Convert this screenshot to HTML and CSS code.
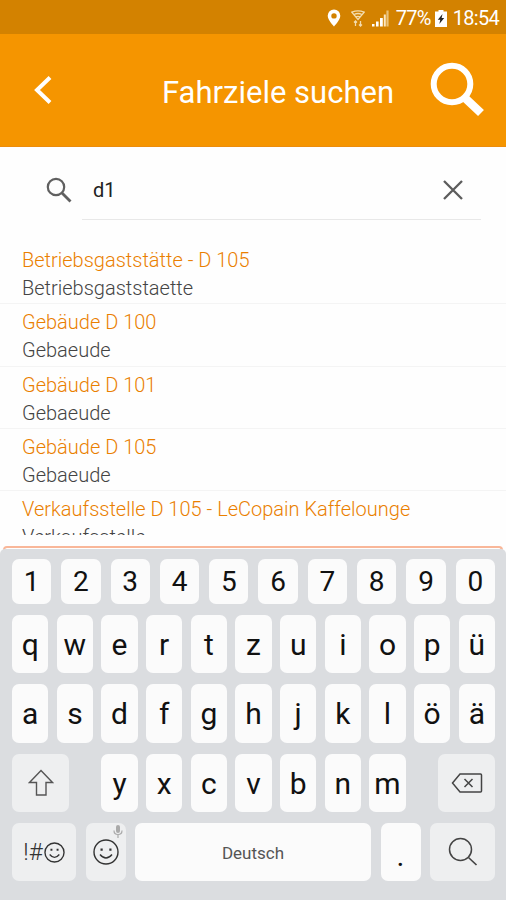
FILE: index.html
```html
<!DOCTYPE html>
<html lang="de">
<head>
    <meta charset="UTF-8">
    <meta name="viewport" content="width=device-width, initial-scale=1.0">
    <title>Fahrziele suchen</title>
    <link rel="stylesheet" href="styles.css">
</head>
<body>
    <div class="status-bar">
        <svg class="status-pin" width="14" height="18" viewBox="0 0 14 18"><path fill="#fff" fill-rule="evenodd" d="M7 .5a6.3 6.3 0 0 0-6.3 6.3C.7 11 7 17.500 7 17.500S13.300 11 13.300 6.800A6.300 6.300 0 0 0 7 .5zm0 3.700a2.700 2.700 0 1 1 0 5.400 2.700 2.700 0 0 1 0-5.400z"/></svg>
        <svg class="status-wifi" width="14" height="17" viewBox="0 0 14 17" fill="none" stroke="#f3dcae" stroke-width="1.300"><path d="M.8 2.200Q7-.6 13.200 2.200L7 9.500z"/><path d="M3 4.500Q7 2.500 11 4.500M4.800 6.800Q7 5.800 9.200 6.800"/><path d="M4.500 16v-5M3 12.500L4.500 11 6 12.500M9.500 11v5M8 14.500l1.500 1.500 1.500-1.500"/></svg>
        <svg class="status-signal" width="17" height="17" viewBox="0 0 17 17"><path fill="#fff" d="M0 14h2.500v2.500H0zM4 11.500h2.600v5H4zM8 8h2.800v8.500H8z"/><path fill="#fbe6c0" d="M11.800 4.500h2v12h-2z"/><path fill="#eac27a" d="M14.400.5h2.200v16h-2.200z"/></svg>
        <span class="status-percent">77%</span>
        <svg class="status-battery" width="12" height="17" viewBox="0 0 12 17"><path fill="#fff" d="M3.500 0h5v1.600H12V17H0V1.600h3.500z"/><path fill="#222" d="M7.500 4L2.800 9.800h2.500L4.300 14 9.200 8H6.600z"/></svg>
        <span class="status-time">18:54</span>
    </div>

    <div class="header">
        <svg class="header-back" width="20" height="32" viewBox="0 0 20 32"><path d="M17 3.500L4 16l13 12.500" fill="none" stroke="#fff" stroke-width="4"/></svg>
        <h1>Fahrziele suchen</h1>
        <svg class="header-search" width="56" height="56" viewBox="0 0 56 56" fill="none" stroke="#fff"><circle cx="22" cy="22" r="18.300" stroke-width="6"/><path d="M34.500 35.500L51 51" stroke-width="8.500"/></svg>
    </div>

    <div class="search">
        <svg class="search-icon" width="26" height="26" viewBox="0 0 26 26" fill="none" stroke="#606060"><circle cx="10" cy="10" r="8.200" stroke-width="2.200"/><path d="M16 16l8.500 8.500" stroke-width="2.800"/></svg>
        <div class="search-field">
            <span>d1</span>
            <svg width="20" height="20" viewBox="0 0 20 20"><path d="M1 1l18 18M19 1L1 19" fill="none" stroke="#5c5c5c" stroke-width="2.300"/></svg>
        </div>
    </div>

    <div class="results">
        <div class="result">
            <div class="result-title">Betriebsgaststätte - D 105</div>
            <div class="result-type">Betriebsgaststaette</div>
        </div>
        <div class="result">
            <div class="result-title">Gebäude D 100</div>
            <div class="result-type">Gebaeude</div>
        </div>
        <div class="result">
            <div class="result-title">Gebäude D 101</div>
            <div class="result-type">Gebaeude</div>
        </div>
        <div class="result">
            <div class="result-title">Gebäude D 105</div>
            <div class="result-type">Gebaeude</div>
        </div>
        <div class="result">
            <div class="result-title">Verkaufsstelle D 105 - LeCopain Kaffelounge</div>
            <div class="result-type">Verkaufsstelle</div>
        </div>
    </div>
    <div class="panel-edge"></div>

    <div class="keyboard">
        <div class="row numbers">
            <div class="key">1</div>
            <div class="key">2</div>
            <div class="key">3</div>
            <div class="key">4</div>
            <div class="key">5</div>
            <div class="key">6</div>
            <div class="key">7</div>
            <div class="key">8</div>
            <div class="key">9</div>
            <div class="key">0</div>
        </div>
        <div class="row">
            <div class="key">q</div>
            <div class="key">w</div>
            <div class="key">e</div>
            <div class="key">r</div>
            <div class="key">t</div>
            <div class="key">z</div>
            <div class="key">u</div>
            <div class="key">i</div>
            <div class="key">o</div>
            <div class="key">p</div>
            <div class="key">ü</div>
        </div>
        <div class="row">
            <div class="key">a</div>
            <div class="key">s</div>
            <div class="key">d</div>
            <div class="key">f</div>
            <div class="key">g</div>
            <div class="key">h</div>
            <div class="key">j</div>
            <div class="key">k</div>
            <div class="key">l</div>
            <div class="key">ö</div>
            <div class="key">ä</div>
        </div>
        <div class="row shift-row">
            <div class="key special">
                <svg width="26" height="28" viewBox="0 0 26 28"><path d="M13 1.500L24.500 13.500H18V26H8.500V13.500H1.500z" fill="none" stroke="#555" stroke-width="1.400"/></svg>
            </div>
            <div class="letters">
                <div class="key">y</div>
                <div class="key">x</div>
                <div class="key">c</div>
                <div class="key">v</div>
                <div class="key">b</div>
                <div class="key">n</div>
                <div class="key">m</div>
            </div>
            <div class="key special">
                <svg width="32" height="22" viewBox="0 0 32 22" fill="none" stroke="#444" stroke-width="1.500"><path d="M9 2H29.500Q30.500 2 30.500 3V19Q30.500 20 29.500 20H9L1.500 11z"/><path d="M13.500 7l8 8M21.500 7l-8 8"/></svg>
            </div>
        </div>
        <div class="row bottom-row">
            <div class="key special symbols">
                <span>!#</span>
                <svg width="21" height="21" viewBox="0 0 26 26" fill="none" stroke="#333" stroke-width="1.700"><circle cx="13" cy="13" r="11.800"/><path d="M7 15.500Q13 22.500 19 15.500"/><path fill="#333" stroke="none" d="M8 8.500h2.400v2.400H8zM15.600 8.500H18v2.400h-2.400z"/></svg>
            </div>
            <div class="key special">
                <svg width="26" height="26" viewBox="0 0 26 26" fill="none" stroke="#333" stroke-width="1.400"><circle cx="13" cy="13" r="12"/><path d="M7 15.500Q13 22.500 19 15.500"/><path fill="#333" stroke="none" d="M7.500 9.500h2.200v2.200H7.500zM16.300 9.500h2.200v2.200h-2.200z"/></svg>
                <svg class="mic" width="10" height="13" viewBox="0 0 10 13"><rect x="3" y="0" width="4" height="8" rx="2" fill="#aaa"/><path d="M1 5.500Q1 9.500 5 9.500T9 5.500M5 9.500V13" fill="none" stroke="#aaa" stroke-width="1.200"/></svg>
            </div>
            <div class="key space">Deutsch</div>
            <div class="key dot">.</div>
            <div class="key special">
                <svg width="30" height="30" viewBox="0 0 30 30" fill="none" stroke="#444"><circle cx="12.500" cy="12.500" r="11" stroke-width="1.500"/><path d="M20.500 20.500l8 7.500" stroke-width="1.700"/></svg>
            </div>
        </div>
    </div>
</body>
</html>
```
FILE: styles.css
```css
* {
    box-sizing: border-box;
}
body {
    margin: 0;
    width: 506px;
    height: 900px;
    overflow: hidden;
    display: flex;
    flex-direction: column;
    font-family: Roboto, sans-serif;
    background-color: #fefefe;
}
svg {
    display: block;
    flex: none;
}
.status-bar {
    height: 34px;
    flex: none;
    display: flex;
    align-items: center;
    justify-content: flex-end;
    padding: 2px 7px 0 0;
    background-color: #d38200;
    color: #fff;
    font-size: 20px;
    letter-spacing: -0.7px;
    white-space: nowrap;
}
.status-wifi {
    margin-left: 10px;
}
.status-signal {
    margin-left: 7px;
}
.status-percent {
    margin-left: 7px;
}
.status-battery {
    margin-left: 4px;
}
.status-time {
    margin-left: 6px;
}
.header {
    height: 113px;
    flex: none;
    display: flex;
    align-items: center;
    padding: 0 20px 0 33px;
    background-color: #f59500;
    border-bottom: 1px solid #ec8c0c;
    color: #fff;
}
.header h1 {
    margin: 4px 0 0 109px;
    font-size: 31px;
    font-weight: 400;
    white-space: nowrap;
}
.header-search {
    margin-left: auto;
}
.search {
    flex: none;
    height: 73px;
    display: flex;
    padding: 0 25px 0 46px;
}
.search-icon {
    margin-top: 30px;
}
.search-field {
    flex: 1;
    display: flex;
    align-items: center;
    justify-content: space-between;
    margin-left: 10px;
    padding: 13px 18px 0 11px;
    border-bottom: 1px solid #e8e8e8;
    color: #222;
    font-size: 20px;
}
.results {
    flex: none;
    height: 315px;
    padding-top: 22px;
    overflow: hidden;
}
.result {
    height: 62.25px;
    padding: 4px 22px 0;
    border-bottom: 1px solid #f4f4f4;
    font-size: 20px;
    font-weight: 300;
    line-height: 28px;
    white-space: nowrap;
}
.result-title {
    color: #ea7f00;
}
.result-type {
    color: #444;
}
.panel-edge {
    flex: none;
    height: 14px;
    margin: 11px 3px -11px;
    border: 2px solid #f9b799;
    border-bottom: none;
    border-radius: 4px 4px 0 0;
}
.keyboard {
    flex: 1;
    position: relative;
    display: flex;
    flex-direction: column;
    gap: 11px;
    padding: 10px 11px 0 12px;
    background-color: #dbdde0;
    border-radius: 5px 5px 0 0;
}
.row {
    height: 58.3px;
    display: flex;
    gap: 8.2px;
}
.numbers {
    height: 45px;
    gap: 10px;
}
.key {
    flex: 1;
    display: flex;
    align-items: center;
    justify-content: center;
    padding-top: 2px;
    border-radius: 7px;
    background-color: #fbfbfb;
    color: #111;
    font-size: 30px;
    line-height: 30px;
}
.numbers .key {
    padding-top: 0;
    font-size: 28px;
}
.special {
    padding-top: 0;
    background-color: #eeeff0;
}
.shift-row {
    justify-content: space-between;
}
.shift-row > .key {
    flex: none;
    width: 57px;
}
.letters {
    width: 304.500px;
    display: flex;
    gap: 8.2px;
}
.bottom-row {
    display: grid;
    grid-template-columns: 64px 40px 236px 40px 65px;
    gap: 9.500px;
}
.bottom-row .key {
    position: relative;
}
.symbols {
    gap: 1px;
    color: #333;
    font-size: 24px;
    font-weight: 300;
}
.mic {
    position: absolute;
    top: 2px;
    right: 3px;
}
.bottom-row .space {
    color: #555;
    font-size: 17px;
}
.bottom-row .dot {
    padding-top: 8px;
}
```
